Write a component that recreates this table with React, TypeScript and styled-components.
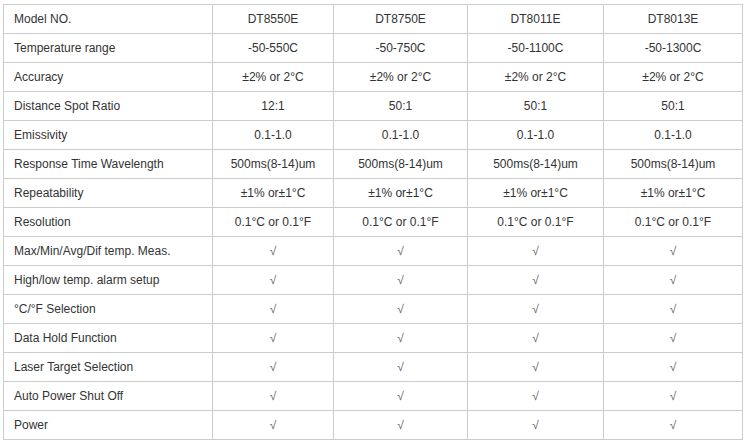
import React from "react";
import styled, { createGlobalStyle } from "styled-components";

const Global = createGlobalStyle`
  html, body { margin: 0; padding: 0; background: #fff; }
  body { font-family: "Liberation Sans", Arial, sans-serif; }
`;

const Wrap = styled.div`
  padding: 4px 0 0 3px;
`;

const Table = styled.table`
  border-collapse: collapse;
  table-layout: fixed;
  width: 739px;
  font-family: "Liberation Sans", Arial, sans-serif;
  font-size: 12px;
  color: #333;
`;

const Row = styled.tr`
  height: 29px;
`;

const Cell = styled.td<{ $first?: boolean }>`
  border: 1px solid #ccc;
  padding: 0 0 0 ${(p) => (p.$first ? "10px" : "0")};
  text-align: ${(p) => (p.$first ? "left" : "center")};
  vertical-align: middle;
  white-space: nowrap;
  line-height: 14px;
`;

const Check = styled.span`
  color: #666;
`;

const widths = [209, 121, 134, 136, 139];

const rows: [string, string[]][] = [
  ["Model NO.", ["DT8550E", "DT8750E", "DT8011E", "DT8013E"]],
  ["Temperature range", ["-50-550C", "-50-750C", "-50-1100C", "-50-1300C"]],
  ["Accuracy", ["±2% or 2°C", "±2% or 2°C", "±2% or 2°C", "±2% or 2°C"]],
  ["Distance Spot Ratio", ["12:1", "50:1", "50:1", "50:1"]],
  ["Emissivity", ["0.1-1.0", "0.1-1.0", "0.1-1.0", "0.1-1.0"]],
  ["Response Time Wavelength", ["500ms(8-14)um", "500ms(8-14)um", "500ms(8-14)um", "500ms(8-14)um"]],
  ["Repeatability", ["±1% or±1°C", "±1% or±1°C", "±1% or±1°C", "±1% or±1°C"]],
  ["Resolution", ["0.1°C or 0.1°F", "0.1°C or 0.1°F", "0.1°C or 0.1°F", "0.1°C or 0.1°F"]],
  ["Max/Min/Avg/Dif temp. Meas.", ["√", "√", "√", "√"]],
  ["High/low temp. alarm setup", ["√", "√", "√", "√"]],
  ["°C/°F Selection", ["√", "√", "√", "√"]],
  ["Data Hold Function", ["√", "√", "√", "√"]],
  ["Laser Target Selection", ["√", "√", "√", "√"]],
  ["Auto Power Shut Off", ["√", "√", "√", "√"]],
  ["Power", ["√", "√", "√", "√"]],
];

export default function App() {
  return (
    <Wrap>
      <Global />
      <Table>
        <colgroup>
          {widths.map((w, i) => (
            <col key={i} style={{ width: w }} />
          ))}
        </colgroup>
        <tbody>
          {rows.map(([label, vals]) => (
            <Row key={label}>
              <Cell $first>{label}</Cell>
              {vals.map((v, i) => (
                <Cell key={i}>{v === "√" ? <Check>{v}</Check> : v}</Cell>
              ))}
            </Row>
          ))}
        </tbody>
      </Table>
    </Wrap>
  );
}
